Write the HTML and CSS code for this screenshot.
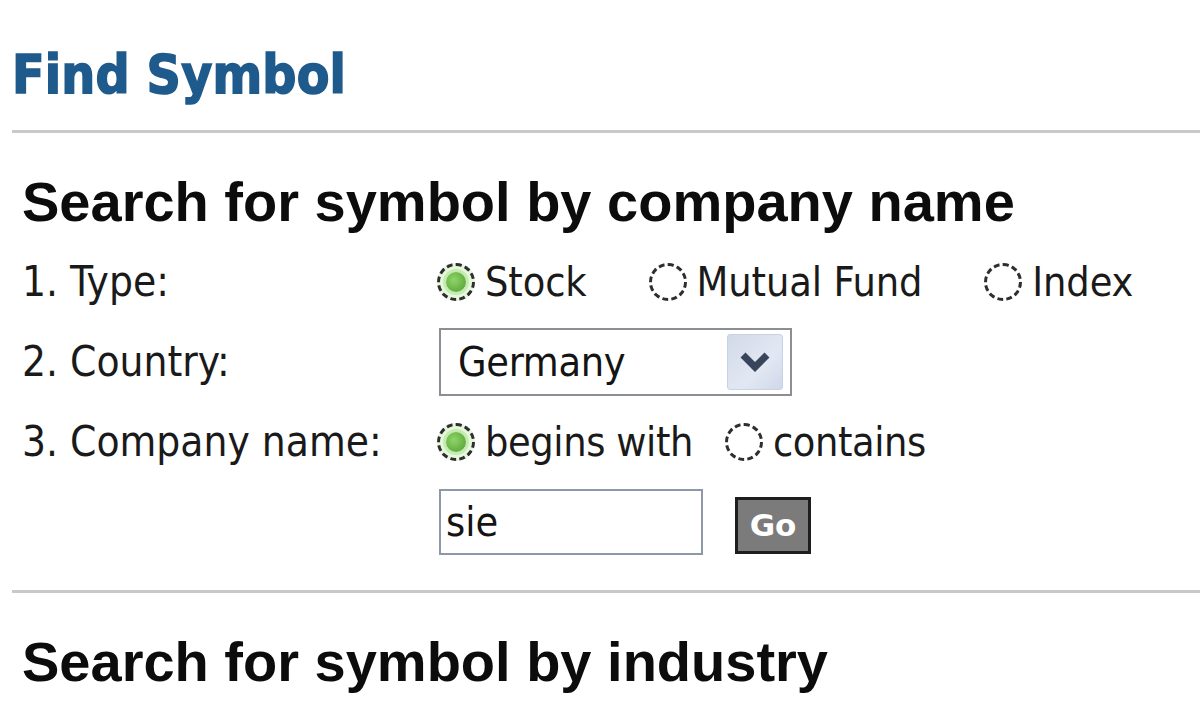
FILE: index.html
```html
<!DOCTYPE html>
<html lang="en">
<head>
<meta charset="utf-8">
<title>Find Symbol</title>
<link rel="stylesheet" href="styles.css">
</head>
<body>
<div class="page">
  <h1 class="title">Find Symbol</h1>
  <hr class="rule rule-top">
  <section class="section">
    <h2 class="heading">Search for symbol by company name</h2>
    <div class="form">
      <div class="label">1. Type:</div>
      <div class="options wide">
        <label class="option"><span class="radio on"></span><span class="opt-text">Stock</span></label>
        <label class="option"><span class="radio"></span><span class="opt-text">Mutual Fund</span></label>
        <label class="option"><span class="radio"></span><span class="opt-text">Index</span></label>
      </div>

      <div class="label">2. Country:</div>
      <div class="field">
        <div class="select">
          <span class="select-text">Germany</span>
          <span class="select-btn">
            <svg width="30" height="24" viewBox="0 0 30 24"><path d="M3 5 L15 17 L27 5" fill="none" stroke="#38455a" stroke-width="7" stroke-linejoin="miter"/></svg>
          </span>
        </div>
      </div>

      <div class="label">3. Company name:</div>
      <div class="options narrow">
        <label class="option"><span class="radio on"></span><span class="opt-text">begins with</span></label>
        <label class="option"><span class="radio"></span><span class="opt-text">contains</span></label>
      </div>

      <div class="label"></div>
      <div class="field search">
        <input class="text-input" type="text" value="sie">
        <button class="go" type="button">Go</button>
      </div>
    </div>
  </section>
  <hr class="rule rule-mid">
  <section class="section">
    <h2 class="heading">Search for symbol by industry</h2>
  </section>
</div>
</body>
</html>
```

FILE: styles.css
```css
html, body {
  margin: 0;
  padding: 0;
  background: #ffffff;
}

body {
  font-family: "DejaVu Sans Condensed", "DejaVu Sans", sans-serif;
  color: #141414;
  overflow: hidden;
}

.page {
  padding: 45px 0 0 12px;
}

.title {
  margin: 0;
  font-family: "DejaVu Sans Condensed", "DejaVu Sans", sans-serif;
  font-weight: bold;
  font-size: 53px;
  line-height: 60px;
  color: #1f5a8d;
  -webkit-text-stroke: 1.5px #1f5a8d;
  letter-spacing: 0.2px;
}

.rule {
  border: 0;
  height: 3px;
  background: #c9c9c9;
  margin: 0;
}

.rule-top {
  margin-top: 25px;
}

.rule-mid {
  margin-top: 28px;
}

.section {
  padding-left: 10px;
}

.heading {
  margin: 37px 0 0 0;
  font-family: "Liberation Sans", Arial, sans-serif;
  font-weight: bold;
  font-size: 56px;
  line-height: 64px;
  color: #0c0c0c;
}

.form {
  display: grid;
  grid-template-columns: 415px 1fr;
  grid-auto-rows: 80px;
  align-items: center;
  margin-top: 8px;
}

.label {
  font-size: 42px;
  line-height: 50px;
  color: #1a1a1a;
}

.options {
  display: flex;
  align-items: center;
}

.options.wide {
  gap: 62px;
}

.options.wide .option {
  letter-spacing: -0.1px;
}

.options.narrow {
  gap: 32px;
}

.option {
  display: flex;
  align-items: center;
  gap: 10px;
  font-size: 41px;
  line-height: 50px;
  letter-spacing: -0.4px;
  color: #1a1a1a;
}

.radio {
  width: 38px;
  height: 38px;
  box-sizing: border-box;
  border-radius: 50%;
  border: 3px dashed #2e2e2e;
  display: flex;
  align-items: center;
  justify-content: center;
  background: #ffffff;
  flex: none;
}

.radio.on {
  background: #e6f7dc;
}

.radio.on::after {
  content: "";
  width: 20px;
  height: 20px;
  border-radius: 50%;
  background: radial-gradient(circle at 40% 40%, #8fd46a, #4f9d2e);
  box-shadow: 0 0 0 3px #c4ecb0;
}

.field {
  display: flex;
  align-items: center;
}

.select {
  margin-left: 2px;
  width: 353px;
  height: 68px;
  box-sizing: border-box;
  border: 2px solid #8b8f94;
  display: flex;
  align-items: center;
  justify-content: space-between;
  padding: 0 7px 0 17px;
  background: #ffffff;
}

.select-text {
  font-size: 41px;
  line-height: 50px;
  letter-spacing: -0.3px;
}

.select-btn {
  width: 56px;
  height: 56px;
  box-sizing: border-box;
  border: 1px solid #c9d2e2;
  border-radius: 3px;
  background: linear-gradient(135deg, #d2d9e8, #e2e8f3 60%, #cfd8ea);
  display: flex;
  align-items: center;
  justify-content: center;
}

.search {
  gap: 32px;
}

.text-input {
  margin: 0 0 0 2px;
  width: 264px;
  height: 66px;
  box-sizing: border-box;
  border: 2px solid #8d99a6;
  padding: 0 0 0 5px;
  font-family: "DejaVu Sans Condensed", "DejaVu Sans", sans-serif;
  font-size: 41px;
  color: #141414;
  background: #ffffff;
  outline: none;
}

.go {
  width: 76px;
  height: 57px;
  box-sizing: border-box;
  border: 3px solid #1e1e1e;
  background: #7b7b7b;
  color: #ffffff;
  font-family: "DejaVu Sans", sans-serif;
  font-weight: bold;
  font-size: 31px;
  padding: 0;
  margin-top: 6px;
}
```
